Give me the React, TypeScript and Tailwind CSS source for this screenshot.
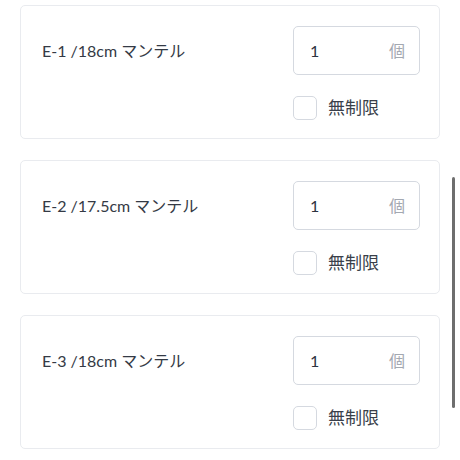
import React from "react";

const items = [
  { code: "E-1", size: "18cm", name: "マンテル", qty: "1" },
  { code: "E-2", size: "17.5cm", name: "マンテル", qty: "1" },
  { code: "E-3", size: "18cm", name: "マンテル", qty: "1" },
];

const font = { fontFamily: "Lato, 'Noto Sans CJK JP', sans-serif" };

function ItemCard({ code, size, name, qty }: (typeof items)[number]) {
  return (
    <div className="flex h-[134px] justify-between rounded-[5px] border border-[#e9ebef] bg-white pl-[21px] pr-[19px] pt-[20px]">
      <div className="flex h-[49px] items-center text-[16px] text-[#343a45]">
        <span>
          {code} /{size} {name}
        </span>
      </div>
      <div className="flex w-[127px] flex-col">
        <div className="flex h-[49px] items-center justify-between rounded-[5px] border border-[#d5d9e0] pl-[16px] pr-[14px]">
          <span className="text-[16px] text-[#2d3340]">{qty}</span>
          <span className="text-[16px] text-[#a3a8b1]">個</span>
        </div>
        <label className="mt-[20px] flex items-center gap-[11px]">
          <span className="h-[24px] w-[24px] rounded-[5px] border border-[#d5d9e0] bg-white" />
          <span className="text-[17px] text-[#3a3f4a]">無制限</span>
        </label>
      </div>
    </div>
  );
}

export default function App() {
  return (
    <div className="relative h-[460px] w-[460px] overflow-hidden bg-white" style={font}>
      <div className="flex flex-col gap-[21px] pl-[20px] pr-[20px] pt-[5px]">
        {items.map((it) => (
          <ItemCard key={it.code} {...it} />
        ))}
      </div>
      {/* scrollbar */}
      <div className="absolute left-[452px] top-[177px] h-[231px] w-[3px] rounded-full bg-[#6e6e6e]" />
    </div>
  );
}
